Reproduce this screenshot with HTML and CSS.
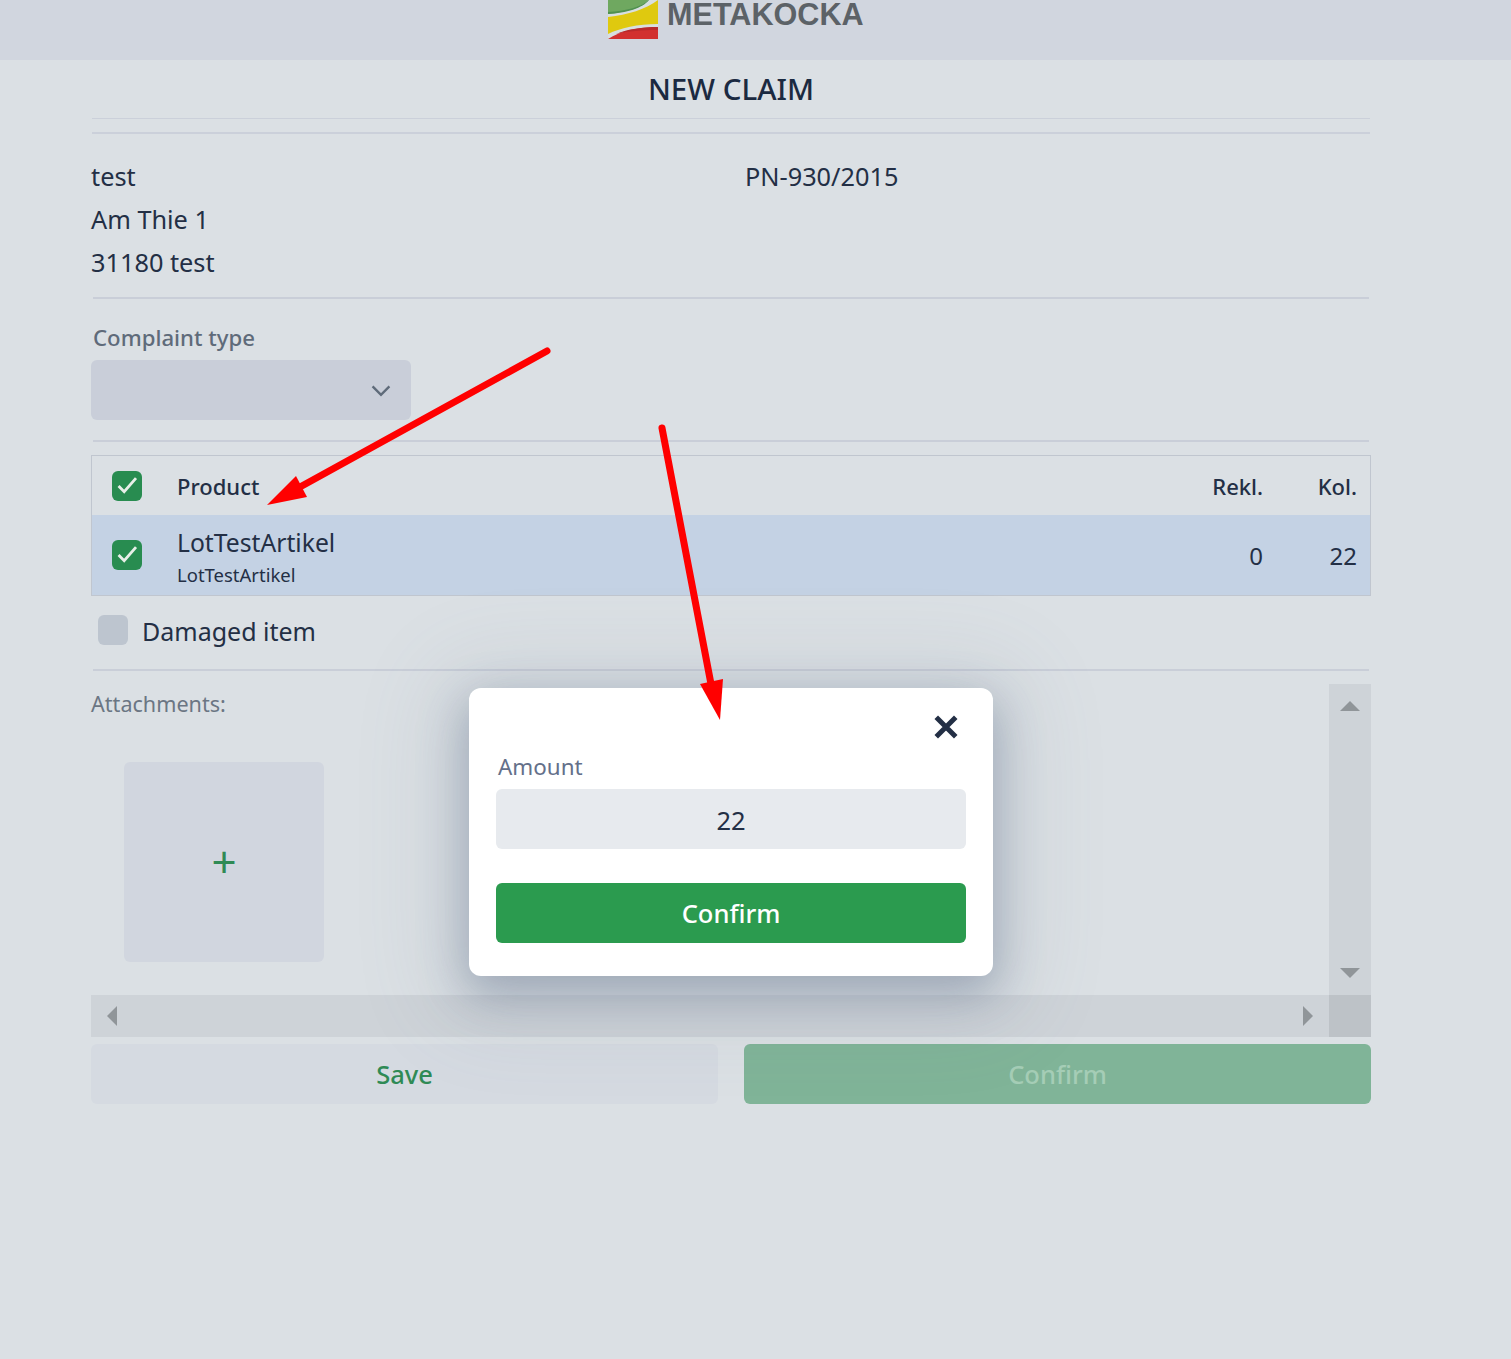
FILE: index.html
```html
<!DOCTYPE html>
<html lang="en">
<head>
    <meta charset="UTF-8">
    <title>New claim</title>
    <link rel="stylesheet" href="styles.css">
</head>
<body>
    <header class="top-bar">
        <div class="brand">
            <svg class="brand-logo" viewBox="0 0 50 39">
                <rect width="50" height="39" fill="#d8dfe0"/>
                <path d="M0 0H40C34 8 18 12 0 14Z" fill="#6fa860"/>
                <path d="M0 12C18 11 34 7 40 0H41C35 8 18 13 0 14Z" fill="#4f9050"/>
                <path d="M0 17C20 15 38 9 50 0V24C30 24 12 28 0 34Z" fill="#dfc90f"/>
                <path d="M0 39C12 31 30 27 50 27V39Z" fill="#d2302f"/>
                <path d="M8 34C20 29 34 27 50 27V30C34 30 20 31 8 34Z" fill="#b72a2c"/>
            </svg>
            <span class="brand-name">METAKOCKA</span>
        </div>
    </header>

    <main class="page">
        <h1 class="page-title">NEW CLAIM</h1>
        <hr class="rule rule-top">

        <section class="customer">
            <div class="customer-address">
                <div>test</div>
                <div>Am Thie 1</div>
                <div>31180 test</div>
            </div>
            <div class="customer-doc">PN-930/2015</div>
        </section>
        <hr class="rule">

        <section class="complaint">
            <label class="field-label">Complaint type</label>
            <div class="select-box">
                <svg viewBox="0 0 20 20"><path d="M3 7l7 7 7-7" fill="none" stroke="#5f6b7a" stroke-width="2"/></svg>
            </div>
        </section>
        <hr class="rule">

        <section class="products">
            <div class="product-row product-head">
                <span class="check checked"><svg viewBox="0 0 16 16"><path d="M3.5 8l3 3 6.3-7.2" fill="none" stroke="#e8efe8" stroke-width="1.5"/></svg></span>
                <span class="product-name">Product</span>
                <span class="col-rekl">Rekl.</span>
                <span class="col-kol">Kol.</span>
            </div>
            <div class="product-row product-item">
                <span class="check checked"><svg viewBox="0 0 16 16"><path d="M3.5 8l3 3 6.3-7.2" fill="none" stroke="#e8efe8" stroke-width="1.5"/></svg></span>
                <span class="product-name">
                    <span class="item-title">LotTestArtikel</span>
                    <span class="item-code">LotTestArtikel</span>
                </span>
                <span class="col-rekl">0</span>
                <span class="col-kol">22</span>
            </div>
        </section>

        <div class="damaged">
            <span class="check"></span>
            <span class="damaged-label">Damaged item</span>
        </div>
        <hr class="rule">

        <section class="attachments">
            <div class="attach-body">
                <div class="attach-content">
                    <div class="attach-label">Attachments:</div>
                    <div class="attach-add">+</div>
                </div>
                <div class="scroll-v">
                    <span class="tri tri-up"></span>
                    <span class="tri tri-down"></span>
                </div>
            </div>
            <div class="scroll-h">
                <div class="scroll-h-track">
                    <span class="tri tri-left"></span>
                    <span class="tri tri-right"></span>
                </div>
                <div class="scroll-corner"></div>
            </div>
        </section>

        <div class="actions">
            <button class="btn btn-save">Save</button>
            <button class="btn btn-disabled">Confirm</button>
        </div>
    </main>

    <div class="modal">
        <div class="modal-close">
            <svg viewBox="0 0 24 24"><path d="M3 3l18 18M21 3L3 21" stroke="#232f45" stroke-width="4.6" fill="none"/></svg>
        </div>
        <label class="modal-label">Amount</label>
        <div class="modal-input">22</div>
        <button class="btn btn-confirm">Confirm</button>
    </div>

    <!-- red arrows drawn over the screenshot -->
    <svg class="arrows" viewBox="0 0 1511 1359">
        <path d="M547 351L300 487" stroke="#f00" stroke-width="7" stroke-linecap="round"/>
        <path d="M267 505L307 497 296 476Z" fill="#f00"/>
        <path d="M662 428L711 684" stroke="#f00" stroke-width="7" stroke-linecap="round"/>
        <path d="M720 720L723 679 700 684Z" fill="#f00"/>
    </svg>
</body>
</html>
```

FILE: styles.css
```css
* {
    margin: 0;
    padding: 0;
    box-sizing: border-box;
}

body {
    font-family: "Noto Sans", sans-serif;
    background: #dbe0e4;
    color: #232f45;
    height: 1359px;
    overflow: hidden;
    position: relative;
}

.top-bar {
    height: 60px;
    background: #d1d6df;
    overflow: hidden;
    padding-left: 608px;
}

.brand {
    display: flex;
    align-items: flex-start;
    gap: 9px;
}

.brand-logo {
    width: 50px;
    height: 39px;
    flex: none;
}

.brand-name {
    font-family: "Liberation Sans", sans-serif;
    font-weight: 700;
    font-size: 30.6px;
    line-height: 28px;
    color: #5c6267;
}

.page {
    width: 1280px;
    margin-left: 91px;
}

.page-title {
    font-size: 29.5px;
    font-weight: 500;
    line-height: 58px;
    height: 59px;
    text-align: center;
    color: #1b2a41;
    border-bottom: 1px solid #cbd0da;
    margin: 0 1px;
}

.rule {
    border: none;
    height: 2px;
    background: #c9ced8;
    margin: 0 2px;
}

.rule-top {
    margin: 13px 1px 0;
    background: #cbd0da;
}

.customer {
    padding: 21px 0 13px;
    display: flex;
    font-size: 25.3px;
    line-height: 43px;
}

.customer-address {
    width: 654px;
}

.complaint {
    padding: 24px 0 20px;
}

.field-label {
    display: block;
    font-size: 22.2px;
    font-weight: 500;
    line-height: 30px;
    margin-left: 2px;
    margin-bottom: 7px;
    color: #5f6b7a;
}

.select-box {
    width: 320px;
    height: 60px;
    background: #c9ced9;
    border-radius: 6px;
    display: flex;
    align-items: center;
    justify-content: flex-end;
    padding-right: 18px;
}

.select-box svg {
    width: 24px;
    height: 24px;
}

.products {
    margin-top: 13px;
    border: 1px solid #c0c6cf;
}

.product-row {
    display: flex;
    align-items: center;
}

.product-head {
    height: 59px;
    font-size: 22px;
    font-weight: 500;
}

.product-item {
    height: 80px;
    background: #c4d2e4;
    font-size: 24px;
}

.product-row .check {
    margin-left: 20px;
    margin-right: 35px;
}

.check {
    width: 30px;
    height: 30px;
    border-radius: 6px;
    background: #bdc5cf;
    flex: none;
    display: flex;
}

.check.checked {
    background: #288c50;
}

.product-name {
    flex: 1;
}

.item-title {
    display: block;
    font-size: 24.7px;
    line-height: 34px;
    margin-top: 4px;
}

.item-code {
    display: block;
    font-size: 18.5px;
    line-height: 26px;
    margin-top: 2px;
}

.col-rekl {
    width: 90px;
    text-align: right;
}

.col-kol {
    width: 107px;
    text-align: right;
    padding-right: 13px;
}

.damaged {
    display: flex;
    align-items: flex-start;
    gap: 14px;
    margin-top: 19px;
    margin-bottom: 23px;
    margin-left: 7px;
}

.damaged-label {
    font-size: 25px;
    line-height: 30px;
    padding-top: 1px;
}

.attachments {
    padding-top: 13px;
}

.attach-body {
    display: flex;
    height: 311px;
}

.attach-content {
    flex: 1;
}

.attach-label {
    font-size: 21.6px;
    line-height: 30px;
    padding-top: 5px;
    color: #6b7683;
}

.attach-add {
    width: 200px;
    height: 200px;
    margin: 43px 0 0 33px;
    padding-bottom: 2px;
    background: #d1d6df;
    border-radius: 6px;
    display: flex;
    align-items: center;
    justify-content: center;
    font-size: 44px;
    color: #2f8a55;
}

.scroll-v {
    width: 42px;
    background: #ced3d8;
    display: flex;
    flex-direction: column;
    justify-content: space-between;
    align-items: center;
    padding: 17px 0 17px;
}

.scroll-h {
    display: flex;
    height: 42px;
}

.scroll-h-track {
    flex: 1;
    background: #ced3d8;
    display: flex;
    justify-content: space-between;
    align-items: center;
    padding: 0 16px;
}

.scroll-corner {
    width: 42px;
    background: #bdc2c7;
}

.tri {
    width: 0;
    height: 0;
    border-style: solid;
    border-color: transparent;
}

.tri-up {
    border-width: 0 10px 10px;
    border-bottom-color: #909599;
}

.tri-down {
    border-width: 10px 10px 0;
    border-top-color: #909599;
}

.tri-left {
    border-width: 10px 10px 10px 0;
    border-right-color: #909599;
}

.tri-right {
    border-width: 10px 0 10px 10px;
    border-left-color: #909599;
}

.actions {
    display: flex;
    justify-content: space-between;
    margin-top: 7px;
}

.btn {
    display: block;
    width: 627px;
    height: 60px;
    border: none;
    border-radius: 6px;
    font-family: inherit;
    font-size: 25.5px;
    font-weight: 500;
}

.btn-save {
    background: #d5dae1;
    color: #2f8a55;
}

.btn-disabled {
    background: #80b498;
    color: #a5cdb6;
}

.modal {
    position: absolute;
    left: 469px;
    top: 688px;
    width: 524px;
    height: 288px;
    background: #fff;
    border-radius: 12px;
    padding: 64px 27px 0;
    box-shadow: 0 16px 45px 4px rgba(100, 116, 139, 0.45), 0 10px 90px 30px rgba(100, 116, 139, 0.12);
}

.modal-close {
    position: absolute;
    top: 26px;
    right: 34px;
    width: 26px;
    height: 26px;
}

.modal-label {
    display: block;
    font-size: 22.4px;
    line-height: 30px;
    margin-left: 2px;
    margin-bottom: 7px;
    color: #64708a;
}

.modal-input {
    height: 60px;
    background: #e7eaee;
    border-radius: 6px;
    font-size: 25.5px;
    line-height: 62px;
    text-align: center;
}

.btn-confirm {
    width: 100%;
    margin-top: 34px;
    background: #2b9b4f;
    color: #fff;
}

.arrows {
    position: absolute;
    left: 0;
    top: 0;
    width: 1511px;
    height: 1359px;
    pointer-events: none;
}
```
